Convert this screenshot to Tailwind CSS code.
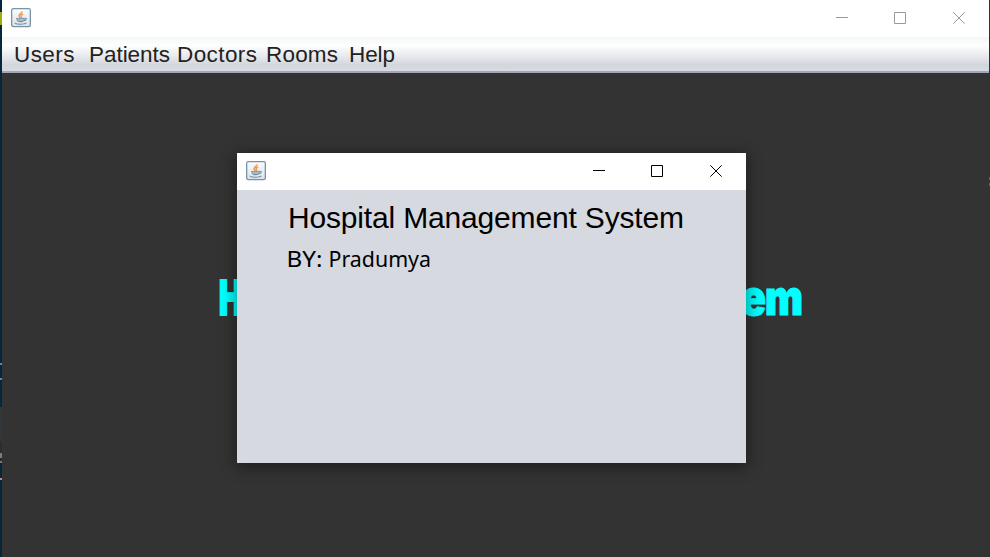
<!DOCTYPE html>
<html lang="en">
<head>
<meta charset="utf-8">
<title>Hospital Management System</title>
<script src="https://cdn.jsdelivr.net/npm/@tailwindcss/browser@4"></script>
</head>
<body class="w-[990px] h-[557px] overflow-hidden relative bg-[#333333] font-['Liberation_Sans',sans-serif]">
<svg class="absolute w-0 h-0">
  <defs>
    <linearGradient id="tile" x1="0" y1="0" x2="0" y2="1"><stop offset="0" stop-color="#fafcfd"/><stop offset="1" stop-color="#dbe2e7"/></linearGradient>
    <symbol id="java" viewBox="0 0 20 20">
      <rect x=".65" y=".65" width="18.7" height="17.9" rx="1.6" fill="url(#tile)" stroke="#7894a7" stroke-width="1.3"/>
      <path d="M10.8 3.4c.8 1.5-2.9 2.7-2.8 4.4.1 1.1 1 1.6 1.4 2.4M12.2 6.1c-1.8.6-2.6 1.6-1.8 2.5.4.5.3 1-.1 1.5" fill="none" stroke="#ee9850" stroke-width="1.5"/>
      <path d="M5.2 10.3c2.3.7 5.9.6 8.2 0M5.9 11.3c.1 1.9 1 2.3 3.6 2.3s3.6-.5 4-2.3M13.6 10.3c2.7-.4 2.1 2-.6 2.3M4.3 14.8c-1.2 1.7 9 2 11.1.1" fill="none" stroke="#6c8ca5" stroke-width="1.1"/>
      <path d="M6.5 11.5h6.5v1.2H6.5z" fill="#93a9b9"/>
    </symbol>
    <symbol id="controls" viewBox="0 0 130 12">
      <path d="M0 5.5h12M58.5.5h11v11h-11z" fill="none" stroke="currentColor"/>
      <path d="M117.3.3l11.4 11.4M128.7.3l-11.4 11.4" fill="none" stroke="currentColor" stroke-width="1"/>
    </symbol>
  </defs>
</svg>
<div class="flex w-full h-full">
  <div class="w-[2px] shrink-0 flex flex-col bg-[#08263a]">
    <div class="h-3"></div><div class="h-[13px] bg-[#a5aa0c]"></div>
    <div class="h-[338px]"></div><div class="h-[2px] bg-[#6a7ec0]"></div>
    <div class="h-[13px]"></div><div class="h-[2px] bg-[#6a7ec0]"></div>
    <div class="h-[27px]"></div><div class="h-[34px] bg-[#30383d]"></div>
    <div class="h-[12px] bg-[#2c2c2c]"></div><div class="h-[5px] bg-[#80796e]"></div>
    <div class="h-[3px] bg-[#2c2c2c]"></div><div class="h-[2px] bg-[#81766d]"></div>
    <div class="h-[15px]"></div><div class="h-[2px] bg-[#b98e88]"></div>
  </div>
  <main class="w-[987px] shrink-0 flex flex-col">
    <header class="h-[37px] shrink-0 bg-white flex items-start justify-between pl-[9px] pr-[23px]">
      <svg class="w-5 h-5 mt-2"><use href="#java"/></svg>
      <svg class="w-[130px] h-3 mt-3 text-[#999]"><use href="#controls"/></svg>
    </header>
    <nav class="h-9 shrink-0 border-b-2 border-[#a2a7b3] bg-[linear-gradient(#f5f7f6_0%,#fdfefe_25%,#e9eaed_55%,#d3d6dc_82%,#d7dae1_100%)]">
      <svg class="w-full h-[34px]" font-size="22.5" fill="#222">
        <text x="12" y="25" textLength="60.5">Users</text>
        <text x="87" y="25" textLength="81">Patients</text>
        <text x="175" y="25" textLength="80">Doctors</text>
        <text x="264" y="25" textLength="72">Rooms</text>
        <text x="347" y="25" textLength="46">Help</text>
      </svg>
    </nav>
    <section class="grow bg-[#333333]">
      <svg class="w-full h-[484px] font-['Inter',sans-serif] font-black" fill="#00ffff" stroke="#00ffff" font-size="48">
        <text x="217" y="241.5" stroke-width="2" textLength="23" lengthAdjust="spacingAndGlyphs">H</text>
        <text x="242" y="241.5" stroke-width="1" textLength="495" lengthAdjust="spacingAndGlyphs">ospital Management Syst</text>
        <text x="739" y="241.5" stroke-width="1.2" textLength="25" lengthAdjust="spacingAndGlyphs">e</text>
        <text x="763" y="241.5" stroke-width="1.2" textLength="38" lengthAdjust="spacingAndGlyphs">m</text>
      </svg>
    </section>
  </main>
  <div class="w-px shrink-0 flex flex-col bg-[#26343c]">
    <div class="h-[177px]"></div><div class="h-[3px] bg-[#4c7741]"></div>
    <div class="h-[3px]"></div><div class="h-[3px] bg-[#4c7741]"></div>
  </div>
</div>
<div class="absolute left-[237px] top-[153px] w-[509px] h-[310px] bg-[#d6d9df] shadow-[0_3px_14px_2px_rgba(0,0,0,0.4)] flex flex-col">
  <header class="h-[37px] shrink-0 bg-white flex items-start justify-between pl-[9px] pr-[23px]">
    <svg class="w-5 h-5 mt-2"><use href="#java"/></svg>
    <svg class="w-[130px] h-3 mt-3 text-black"><use href="#controls"/></svg>
  </header>
  <svg class="w-full grow">
    <text x="51" y="38" font-size="30" textLength="396">Hospital Management System</text>
    <g font-size="21.5" class="font-['Noto_Sans',sans-serif]">
      <text x="49.5" y="77" textLength="36" lengthAdjust="spacingAndGlyphs">BY:</text>
      <text x="91.5" y="77" textLength="102.5" lengthAdjust="spacingAndGlyphs">Pradumya</text>
    </g>
  </svg>
</div>
</body>
</html>
